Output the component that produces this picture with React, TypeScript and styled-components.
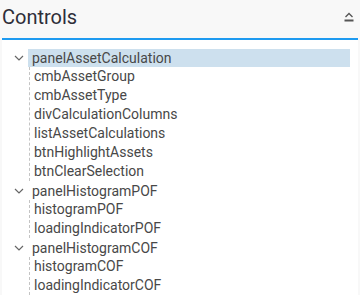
import React from 'react';
import styled, { createGlobalStyle } from 'styled-components';

const GlobalStyle = createGlobalStyle`
  html, body {
    margin: 0;
    padding: 0;
    background: #f8f8f8;
    font-family: Roboto, "Liberation Sans", sans-serif;
  }
`;

interface TreeNode {
  label: string;
  children?: string[];
}

const nodes: TreeNode[] = [
  {
    label: 'panelAssetCalculation',
    children: [
      'cmbAssetGroup',
      'cmbAssetType',
      'divCalculationColumns',
      'listAssetCalculations',
      'btnHighlightAssets',
      'btnClearSelection',
    ],
  },
  { label: 'panelHistogramPOF', children: ['histogramPOF', 'loadingIndicatorPOF'] },
  { label: 'panelHistogramCOF', children: ['histogramCOF', 'loadingIndicatorCOF'] },
];

const Chevron = () => (
  <svg width="10" height="6" viewBox="0 0 10 6">
    <path d="M1 1 L5 5 L9 1" fill="none" stroke="#666" strokeWidth="1.2" />
  </svg>
);

const CollapseIcon = () => (
  <svg width="10" height="10" viewBox="0 0 10 10">
    <path d="M1.5 5 L5 1.5 L8.5 5" fill="none" stroke="#555" strokeWidth="1.3" />
    <rect x="0.5" y="7.5" width="9" height="2" fill="#555" />
  </svg>
);

const App: React.FC = () => {
  return (
    <>
      <GlobalStyle />
      <Panel>
        <Header>
          <Title>Controls</Title>
          <IconButton>
            <CollapseIcon />
          </IconButton>
        </Header>
        <Body>
          {nodes.map((node, i) => (
            <Group key={node.label}>
              <ParentRow>
                <Toggle>
                  <Chevron />
                </Toggle>
                <ParentLabel selected={i === 0}>{node.label}</ParentLabel>
              </ParentRow>
              <Children>
                {node.children?.map((c) => (
                  <ChildRow key={c}>{c}</ChildRow>
                ))}
              </Children>
            </Group>
          ))}
        </Body>
      </Panel>
    </>
  );
};

export default App;

const Panel = styled.div`
  display: flex;
  flex-direction: column;
  width: 360px;
  height: 295px;
  overflow: hidden;
`;

const Header = styled.div`
  display: flex;
  align-items: center;
  justify-content: space-between;
  height: 39px;
  padding: 0 5px 0 2px;
  box-sizing: border-box;
`;

const Title = styled.div`
  color: #2e2e38;
  font-size: 20px;
  line-height: 24px;
  margin-top: -4px;
`;

const IconButton = styled.div`
  display: flex;
  align-items: center;
  justify-content: center;
  width: 12px;
  height: 12px;
  margin-top: -5px;
`;

const Body = styled.div`
  flex: 1;
  margin: 0 2px;
  background: #fff;
  border-top: 2px solid #1e9af0;
  padding-top: 8px;
`;

const Group = styled.div`
  display: flex;
  flex-direction: column;
`;

const ParentRow = styled.div`
  display: flex;
  align-items: center;
  height: 19px;
`;

const Toggle = styled.div`
  display: flex;
  align-items: center;
  justify-content: center;
  width: 10px;
  margin-left: 12px;
  margin-right: 4px;
`;

const ParentLabel = styled.div<{ selected: boolean }>`
  flex: 0 0 322px;
  height: 18px;
  line-height: 18px;
  padding-left: 4px;
  box-sizing: border-box;
  font-size: 14px;
  color: #484848;
  background: ${({ selected }) => (selected ? '#cde0ee' : 'transparent')};
`;

const Children = styled.div`
  display: flex;
  flex-direction: column;
  margin-left: 27px;
  border-left: 1px dashed #c4c4c4;
`;

const ChildRow = styled.div`
  height: 19px;
  line-height: 19px;
  padding-left: 4px;
  font-size: 14px;
  color: #484848;
`;
